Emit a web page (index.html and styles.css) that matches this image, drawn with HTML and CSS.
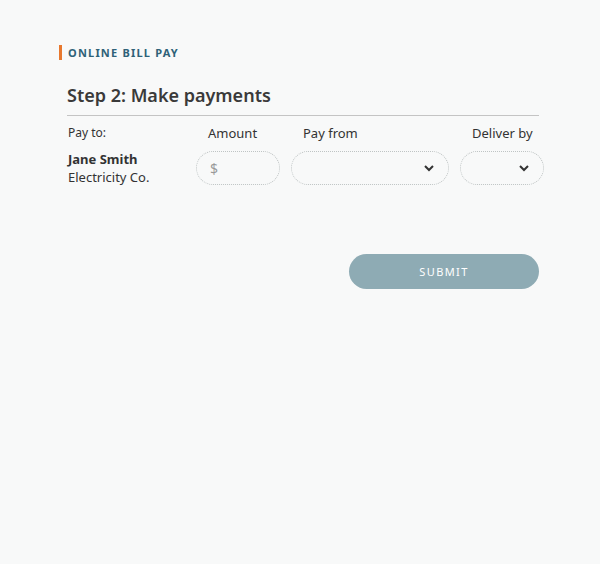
FILE: index.html
```html
<!DOCTYPE html>
<html lang="en">
<head>
    <meta charset="UTF-8">
    <title>Online Bill Pay</title>
    <link rel="stylesheet" href="styles.css">
</head>
<body>
    <div class="bill-pay">
        <div class="eyebrow">Online Bill Pay</div>
        <h1 class="step-title">Step 2: Make payments</h1>

        <div class="pay-grid">
            <div class="col-head first">Pay to:</div>
            <div class="col-head">Amount</div>
            <div class="col-head">Pay from</div>
            <div class="col-head">Deliver by</div>

            <div class="payee">
                <div class="payee-name">Jane Smith</div>
                <div class="payee-org">Electricity Co.</div>
            </div>
            <div class="field">
                <span class="currency">$</span>
            </div>
            <div class="field select">
                <svg class="chevron" width="12" height="8" viewBox="0 0 12 8"><path d="M2 2 L6 6 L10 2" fill="none" stroke="#333" stroke-width="2"/></svg>
            </div>
            <div class="field select">
                <svg class="chevron" width="12" height="8" viewBox="0 0 12 8"><path d="M2 2 L6 6 L10 2" fill="none" stroke="#333" stroke-width="2"/></svg>
            </div>
        </div>

        <div class="actions">
            <button class="submit-btn">Submit</button>
        </div>
    </div>
</body>
</html>
```

FILE: styles.css
```css
* {
    margin: 0;
    padding: 0;
    box-sizing: border-box;
}

body {
    background: #f8f9f9;
    color: #333;
    font-family: "Noto Sans", "Open Sans", sans-serif;
    height: 100vh;
}

.bill-pay {
    width: 480px;
    margin-left: 59px;
    padding-top: 45px;
}

.eyebrow {
    border-left: 3px solid #e8782e;
    padding-left: 6px;
    height: 15px;
    line-height: 15px;
    font-size: 11px;
    font-weight: 700;
    letter-spacing: 1.2px;
    text-transform: uppercase;
    color: #2f6278;
}

.step-title {
    margin: 21px 0 0 8px;
    padding-bottom: 6px;
    font-size: 18px;
    font-weight: 600;
    line-height: 28px;
    color: #3a3a3a;
    border-bottom: 1px solid #c4c4c4;
}

.pay-grid {
    display: grid;
    grid-template-columns: 117px 84px 158px 84px;
    column-gap: 11px;
    margin-left: 9px;
    padding-top: 7px;
}

.col-head {
    font-size: 13px;
    line-height: 20px;
    padding-left: 12px;
    color: #333;
    margin-bottom: 8px;
}

.col-head.first {
    padding-left: 0;
    font-size: 12px;
}

.payee {
    font-size: 13px;
    line-height: 18px;
    margin-top: -1px;
}

.payee-name {
    font-weight: 700;
}

.field {
    height: 34px;
    border: 1px dotted #bfc4c4;
    border-radius: 17px;
    display: flex;
    align-items: center;
    padding: 0 13px;
}

.currency {
    font-size: 14px;
    color: #999;
}

.field.select {
    justify-content: flex-end;
}

.chevron {
    display: block;
}

.actions {
    display: flex;
    justify-content: flex-end;
    margin-top: 68px;
}

.submit-btn {
    width: 190px;
    height: 35px;
    border: none;
    border-radius: 18px;
    background: #8eabb4;
    color: #fff;
    font-family: inherit;
    font-size: 11px;
    letter-spacing: 1.4px;
    text-transform: uppercase;
}
```
